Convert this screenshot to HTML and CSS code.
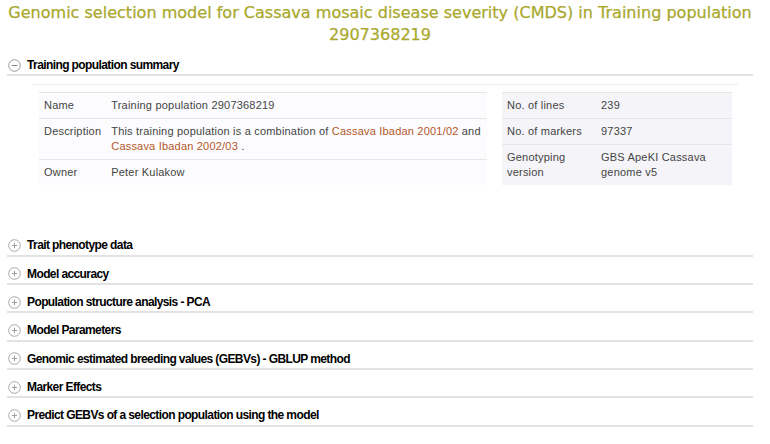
FILE: index.html
```html
<!DOCTYPE html>
<html>
<head>
<meta charset="utf-8">
<link rel="stylesheet" href="styles.css">
</head>
<body>
<div class="page">
  <h1 class="title">Genomic selection model for Cassava mosaic disease severity (CMDS) in Training population 2907368219</h1>

  <div class="section">
    <div class="sec-head">
      <svg class="icon" width="13" height="13" viewBox="0 0 13 13"><circle cx="6.5" cy="6.5" r="5.8" fill="#fff" stroke="#9a9a9a" stroke-width="1"/><line x1="3.5" y1="6.5" x2="9.5" y2="6.5" stroke="#8a8a8a" stroke-width="1"/></svg>
      <span>Training population summary</span>
    </div>
    <div class="sec-body">
      <div class="tables">
        <table class="tbl tbl-left">
          <tr><td class="lab">Name</td><td>Training population 2907368219</td></tr>
          <tr><td class="lab">Description</td><td>This training population is a combination of <a href="#">Cassava Ibadan 2001/02</a> and <a href="#">Cassava Ibadan 2002/03</a> .</td></tr>
          <tr><td class="lab">Owner</td><td>Peter Kulakow</td></tr>
        </table>
        <table class="tbl tbl-right">
          <tr><td class="lab">No. of lines</td><td>239</td></tr>
          <tr><td class="lab">No. of markers</td><td>97337</td></tr>
          <tr><td class="lab">Genotyping version</td><td>GBS ApeKI Cassava genome v5</td></tr>
        </table>
      </div>
    </div>
  </div>

  <div class="sec-head"><svg class="icon" width="13" height="13" viewBox="0 0 13 13"><circle cx="6.5" cy="6.5" r="5.8" fill="#fff" stroke="#a8a8a8" stroke-width="1"/><line x1="3.8" y1="6.5" x2="9.2" y2="6.5" stroke="#a0a0a0" stroke-width="1"/><line x1="6.5" y1="3.8" x2="6.5" y2="9.2" stroke="#a0a0a0" stroke-width="1"/></svg><span>Trait phenotype data</span></div>
  <div class="sec-head"><svg class="icon" width="13" height="13" viewBox="0 0 13 13"><circle cx="6.5" cy="6.5" r="5.8" fill="#fff" stroke="#a8a8a8" stroke-width="1"/><line x1="3.8" y1="6.5" x2="9.2" y2="6.5" stroke="#a0a0a0" stroke-width="1"/><line x1="6.5" y1="3.8" x2="6.5" y2="9.2" stroke="#a0a0a0" stroke-width="1"/></svg><span>Model accuracy</span></div>
  <div class="sec-head"><svg class="icon" width="13" height="13" viewBox="0 0 13 13"><circle cx="6.5" cy="6.5" r="5.8" fill="#fff" stroke="#a8a8a8" stroke-width="1"/><line x1="3.8" y1="6.5" x2="9.2" y2="6.5" stroke="#a0a0a0" stroke-width="1"/><line x1="6.5" y1="3.8" x2="6.5" y2="9.2" stroke="#a0a0a0" stroke-width="1"/></svg><span>Population structure analysis - PCA</span></div>
  <div class="sec-head"><svg class="icon" width="13" height="13" viewBox="0 0 13 13"><circle cx="6.5" cy="6.5" r="5.8" fill="#fff" stroke="#a8a8a8" stroke-width="1"/><line x1="3.8" y1="6.5" x2="9.2" y2="6.5" stroke="#a0a0a0" stroke-width="1"/><line x1="6.5" y1="3.8" x2="6.5" y2="9.2" stroke="#a0a0a0" stroke-width="1"/></svg><span>Model Parameters</span></div>
  <div class="sec-head"><svg class="icon" width="13" height="13" viewBox="0 0 13 13"><circle cx="6.5" cy="6.5" r="5.8" fill="#fff" stroke="#a8a8a8" stroke-width="1"/><line x1="3.8" y1="6.5" x2="9.2" y2="6.5" stroke="#a0a0a0" stroke-width="1"/><line x1="6.5" y1="3.8" x2="6.5" y2="9.2" stroke="#a0a0a0" stroke-width="1"/></svg><span>Genomic estimated breeding values (GEBVs) - GBLUP method</span></div>
  <div class="sec-head"><svg class="icon" width="13" height="13" viewBox="0 0 13 13"><circle cx="6.5" cy="6.5" r="5.8" fill="#fff" stroke="#a8a8a8" stroke-width="1"/><line x1="3.8" y1="6.5" x2="9.2" y2="6.5" stroke="#a0a0a0" stroke-width="1"/><line x1="6.5" y1="3.8" x2="6.5" y2="9.2" stroke="#a0a0a0" stroke-width="1"/></svg><span>Marker Effects</span></div>
  <div class="sec-head"><svg class="icon" width="13" height="13" viewBox="0 0 13 13"><circle cx="6.5" cy="6.5" r="5.8" fill="#fff" stroke="#a8a8a8" stroke-width="1"/><line x1="3.8" y1="6.5" x2="9.2" y2="6.5" stroke="#a0a0a0" stroke-width="1"/><line x1="6.5" y1="3.8" x2="6.5" y2="9.2" stroke="#a0a0a0" stroke-width="1"/></svg><span>Predict GEBVs of a selection population using the model</span></div>
</div>
</body>
</html>
```

FILE: styles.css
```css
html, body {
  margin: 0;
  padding: 0;
  background: #fff;
}
.page {
  margin-left: 7px;
  width: 746px;
  font-family: "Liberation Sans", Arial, sans-serif;
}
.title {
  margin: 0;
  padding-top: 2px;
  height: 46px;
  font-family: "DejaVu Sans", Verdana, sans-serif;
  font-weight: normal;
  font-size: 16.05px;
  line-height: 22px;
  color: #a9a82c;
  text-align: center;
  -webkit-text-stroke: 0.25px #a9a82c;
}
.sec-head {
  display: flex;
  align-items: center;
  gap: 6px;
  height: 28.33px;
  padding-top: 8px;
  box-sizing: border-box;
  border-bottom: 2px solid #e2e2e2;
  padding-left: 1px;
  font-size: 12px;
  font-weight: bold;
  letter-spacing: -0.6px;
  color: #000;
}
.icon {
  flex: none;
}
.sec-body {
  margin: 8px 15px 43px 25px;
  border-top: 1px solid #ececec;
}
.tables {
  display: flex;
  gap: 15px;
  margin-top: 7px;
  padding-left: 7px;
}
.tbl {
  border-collapse: collapse;
  font-size: 11px;
  letter-spacing: 0.2px;
  line-height: 15px;
  color: #444;
}
.tbl td {
  padding: 5px;
  border-top: 1px solid #e6e6e6;
  vertical-align: top;
}
.tbl-left {
  width: 448px;
  background: #fcfcfe;
}
.tbl-left .lab {
  width: 56px;
}
.tbl-right {
  width: 230px;
  background: #f4f4f9;
}
.tbl-right .lab {
  width: 84px;
}
.tbl a {
  color: #b4572a;
  text-decoration: none;
}
```
